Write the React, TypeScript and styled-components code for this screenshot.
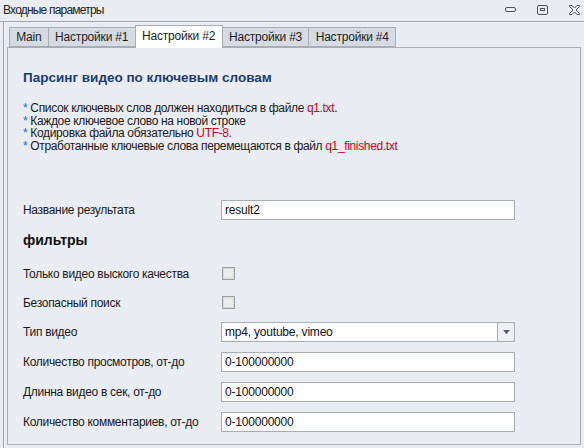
import React from 'react';
import styled, { createGlobalStyle } from 'styled-components';

const GlobalStyle = createGlobalStyle`
  html, body {
    margin: 0;
    padding: 0;
    background: #e9ecf1;
  }
  body {
    font-family: "Liberation Sans", Arial, sans-serif;
    font-size: 12px;
    color: #1a1a1a;
  }
`;

const Window = styled.div`
  width: 584px;
  height: 448px;
  background: #e9ecf1;
  display: flex;
  flex-direction: column;
  overflow: hidden;
`;

const TitleBar = styled.div`
  border-bottom: 1px solid #a4a7ad;
  display: flex;
  align-items: center;
  padding-left: 3px;
  box-sizing: border-box;
  height: 22px;
  font-size: 12px;
  letter-spacing: -0.8px;
  color: #222;
`;

const TitleText = styled.span`
  flex: 1;
  padding-bottom: 1px;
`;

const Controls = styled.div`
  display: flex;
  align-items: center;
  gap: 21px;
  padding-right: 4px;
  height: 100%;
  padding-bottom: 2px;
  box-sizing: border-box;
`;

const Frame = styled.div`
  flex: 1;
  margin-left: 3px;
  border-left: 1px solid #a4a7ad;
  padding: 3px 3px 3px 3px;
  display: flex;
  flex-direction: column;
`;

const TabStrip = styled.div`
  display: flex;
  align-items: flex-end;
  padding-left: 3px;
  height: 22px;
  position: relative;
  z-index: 1;
`;

const Tab = styled.div<{ $active?: boolean }>`
  box-sizing: border-box;
  height: ${p => (p.$active ? '23px' : '20px')};
  margin-bottom: ${p => (p.$active ? '-1px' : '0')};
  padding: ${p => (p.$active ? '0 6.5px 3px' : '0 6.3px')};
  display: flex;
  align-items: center;
  border: 1px solid #a9adb4;
  border-bottom: ${p => (p.$active ? 'none' : '1px solid #a9adb4')};
  margin-left: -1px;
  background: ${p => (p.$active ? '#ffffff' : '#d6dae1')};
  font-size: 12px;
  letter-spacing: -0.2px;
  color: #1e1e1e;
  white-space: nowrap;
`;

const Panel = styled.div`
  flex: 1;
  border: 1px solid #a9adb4;
  background: #e9ecf1;
  padding: 0 15px;
  display: flex;
  flex-direction: column;
`;

const Heading = styled.h1`
  margin: 22px 0 0;
  font-size: 13.5px;
  line-height: 16px;
  font-weight: bold;
  color: #1b3d6b;
`;

const Notes = styled.div`
  margin-top: 16px;
  font-size: 12px;
  line-height: 12.7px;
  letter-spacing: -0.35px;
  color: #1a1a1a;
`;

const Star = styled.span`
  color: #2468d6;
  margin-right: 3px;
`;

const Red = styled.span`
  color: #d4001e;
`;

const Form = styled.div`
  margin-top: 47px;
  display: flex;
  flex-direction: column;
  gap: 10px;
`;

const Row = styled.div<{ $tight?: boolean }>`
  display: grid;
  grid-template-columns: 198px 294px;
  align-items: center;
  height: 20px;
  margin-top: ${p => (p.$tight ? '-1px' : '0')};
`;

const Label = styled.span`
  font-size: 12px;
  letter-spacing: -0.3px;
  padding-top: 1px;
`;

const Section = styled.div`
  font-size: 14px;
  font-weight: bold;
  height: 20px;
  line-height: 20px;
  margin-bottom: 4px;
  color: #111;
`;

const Field = styled.div`
  box-sizing: border-box;
  height: 20px;
  border: 1px solid #a9adb4;
  background: #fff;
  display: flex;
  align-items: center;
  padding-left: 3px;
  font-size: 12px;
  letter-spacing: -0.2px;
  color: #111;
`;

const SelectBox = styled(Field)`
  padding-right: 0;
`;

const SelectText = styled.span`
  flex: 1;
`;

const DropButton = styled.div`
  width: 16px;
  height: 100%;
  border-left: 1px solid #a9adb4;
  background: #edeff2;
  display: flex;
  align-items: center;
  justify-content: center;
`;

const Check = styled.div`
  box-sizing: border-box;
  width: 13px;
  height: 13px;
  margin-left: 1px;
  border: 1px solid #9c9fa4;
  background: #ebebeb;
  box-shadow: inset 0 0 0 1px #dadada;
`;

const Minimize = () => (
  <svg width="11" height="6" viewBox="0 0 11 6">
    <rect x="0.5" y="0.5" width="10" height="4" rx="1.5" fill="none" stroke="#505256" />
  </svg>
);

const Maximize = () => (
  <svg width="11" height="10" viewBox="0 0 11 10">
    <rect x="0.5" y="0.5" width="10" height="9" rx="1.5" fill="none" stroke="#505256" />
    <rect x="3.5" y="3.5" width="4" height="2" fill="none" stroke="#505256" />
  </svg>
);

const Close = () => (
  <svg width="11" height="10" viewBox="0 0 11 10">
    <path
      d="M0.5 0.5 H3 L5.5 3 L8 0.5 H10.5 V1.5 L7 5 L10.5 8.5 V9.5 H8 L5.5 7 L3 9.5 H0.5 V8.5 L4 5 L0.5 1.5 Z"
      fill="none"
      stroke="#505256"
      strokeWidth="1"
    />
  </svg>
);

const tabs = ['Main', 'Настройки #1', 'Настройки #2', 'Настройки #3', 'Настройки #4'];

const ranges = [
  'Количество просмотров, от-до',
  'Длинна видео в сек, от-до',
  'Количество комментариев, от-до',
];

const App = () => {
  const [active, setActive] = React.useState(2);
  return (
    <Window>
      <GlobalStyle />
      <TitleBar>
        <TitleText>Входные параметры</TitleText>
        <Controls>
          <Minimize />
          <Maximize />
          <Close />
        </Controls>
      </TitleBar>
      <Frame>
        <TabStrip>
          {tabs.map((t, i) => (
            <Tab key={t} $active={i === active} onClick={() => setActive(i)}>
              {t}
            </Tab>
          ))}
        </TabStrip>
        <Panel>
          <Heading>Парсинг видео по ключевым словам</Heading>
          <Notes>
            <div><Star>*</Star>Список ключевых слов должен находиться в файле <Red>q1.txt</Red>.</div>
            <div><Star>*</Star>Каждое ключевое слово на новой строке</div>
            <div><Star>*</Star>Кодировка файла обязательно <Red>UTF-8</Red>.</div>
            <div><Star>*</Star>Отработанные ключевые слова перемещаются в файл <Red>q1_finished.txt</Red></div>
          </Notes>
          <Form>
            <Row>
              <Label>Название результата</Label>
              <Field>result2</Field>
            </Row>
            <Section>фильтры</Section>
            <Row>
              <Label>Только видео выского качества</Label>
              <Check />
            </Row>
            <Row $tight>
              <Label>Безопасный поиск</Label>
              <Check />
            </Row>
            <Row $tight>
              <Label>Тип видео</Label>
              <SelectBox>
                <SelectText>mp4, youtube, vimeo</SelectText>
                <DropButton>
                  <svg width="7" height="4" viewBox="0 0 7 4">
                    <path d="M0 0 H7 L3.5 4 Z" fill="#55585d" />
                  </svg>
                </DropButton>
              </SelectBox>
            </Row>
            {ranges.map(r => (
              <Row key={r}>
                <Label>{r}</Label>
                <Field>0-100000000</Field>
              </Row>
            ))}
          </Form>
        </Panel>
      </Frame>
    </Window>
  );
};

export default App;
